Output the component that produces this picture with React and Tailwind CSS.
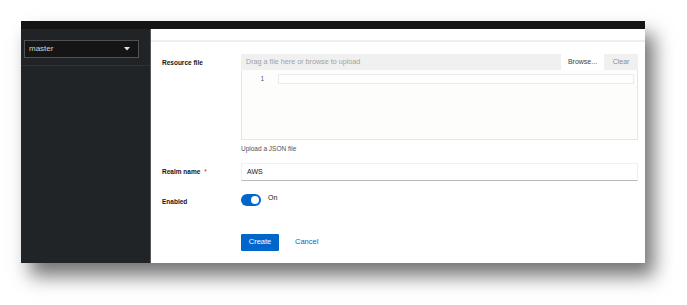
import React from "react";

const font = { fontFamily: '"Liberation Sans", Arial, sans-serif' };

const Label = ({ children, required, className = "" }) => (
  <div className={`w-[79px] shrink-0 text-[6.5px] font-bold text-[#151515] ${className}`}>
    {children}
    {required && <span className="ml-[4px] font-normal text-[#c9190b]">*</span>}
  </div>
);

export default function App() {
  return (
    <div className="w-[687px] h-[305px] bg-white pl-[21px] pt-[21px]" style={font}>
      <div className="w-[624px] h-[242px] flex flex-col shadow-[9px_13px_18px_rgba(0,0,0,0.55)]">
        {/* masthead */}
        <div className="h-[8px] bg-[#151515]" />

        <div className="flex flex-1">
          {/* sidebar */}
          <div className="w-[129px] bg-[#212427] flex flex-col">
            <div className="pt-[11px] px-[3px]">
              <div className="h-[18px] w-[115px] border border-[#4f5255] bg-[#151515] flex items-center justify-between pl-[4px] pr-[8px]">
                <span className="text-[8px] text-[#d2d2d2]">master</span>
                <svg width="6" height="4" viewBox="0 0 6 4">
                  <path d="M0 0h6L3 3.5z" fill="#e0e0e0" />
                </svg>
              </div>
            </div>
            <div className="mt-[7px] h-px bg-[#2e3236]" />
          </div>

          {/* main */}
          <div className="flex-1 bg-white border-l border-[#55585c] flex flex-col">
            <div className="h-[11px] border-b-2 border-[#eeeeee] box-content" />

            <div className="pl-[11px] pr-[7px] pt-[12px] flex flex-col">
              {/* resource file */}
              <div className="flex">
                <Label className="pt-[4px]">Resource file</Label>
                <div className="flex-1 flex flex-col">
                  <div className="h-[16px] bg-[#f0f0f0] flex items-center">
                    <span className="flex-1 pl-[5px] text-[7.2px] text-[#a2a2a2]">
                      Drag a file here or browse to upload
                    </span>
                    <span className="h-full w-[43px] bg-white flex items-center justify-center text-[7px] text-[#3c3f42]">
                      Browse...
                    </span>
                    <span className="h-full w-[34px] flex items-center justify-center text-[7px] text-[#8a8d90]">
                      Clear
                    </span>
                  </div>
                  <div className="h-[70px] border border-t-0 border-[#e6e6e6] bg-[#fdfdfb] flex items-start pt-[4px]">
                    <span className="w-[36px] pr-[14px] text-right text-[6.5px] text-[#4a5a8a] leading-[10px]">1</span>
                    <div className="flex-1 mr-[3px] h-[10px] border border-[#ebebeb] bg-white" />
                  </div>
                  <div className="mt-[4px] text-[6.5px] text-[#4f5255]">Upload a JSON file</div>
                </div>
              </div>

              {/* realm name */}
              <div className="flex items-center mt-[9px]">
                <Label required>Realm name</Label>
                <div className="flex-1 h-[18px] border border-[#f0f0f0] border-b-[#b8bbbe] flex items-center pl-[5px] text-[7px] text-[#151515]">
                  AWS
                </div>
              </div>

              {/* enabled */}
              <div className="flex mt-[12px]">
                <Label className="pt-[4px]">Enabled</Label>
                <div className="flex items-center">
                  <div className="w-[20px] h-[12px] rounded-full bg-[#0066cc] flex items-center justify-end pr-[2px]">
                    <div className="w-[8px] h-[8px] rounded-full bg-white" />
                  </div>
                  <span className="ml-[7px] text-[7px] text-[#151515] -mt-[2px]">On</span>
                </div>
              </div>

              {/* actions */}
              <div className="flex mt-[27px]">
                <div className="w-[79px] shrink-0" />
                <button className="h-[17px] w-[38px] bg-[#0066cc] text-white text-[7.5px] rounded-[1px] flex items-center justify-center">
                  Create
                </button>
                <button className="ml-[16px] h-[17px] text-[#0066cc] text-[7.5px] flex items-center">
                  Cancel
                </button>
              </div>
            </div>
          </div>
        </div>
      </div>
    </div>
  );
}
